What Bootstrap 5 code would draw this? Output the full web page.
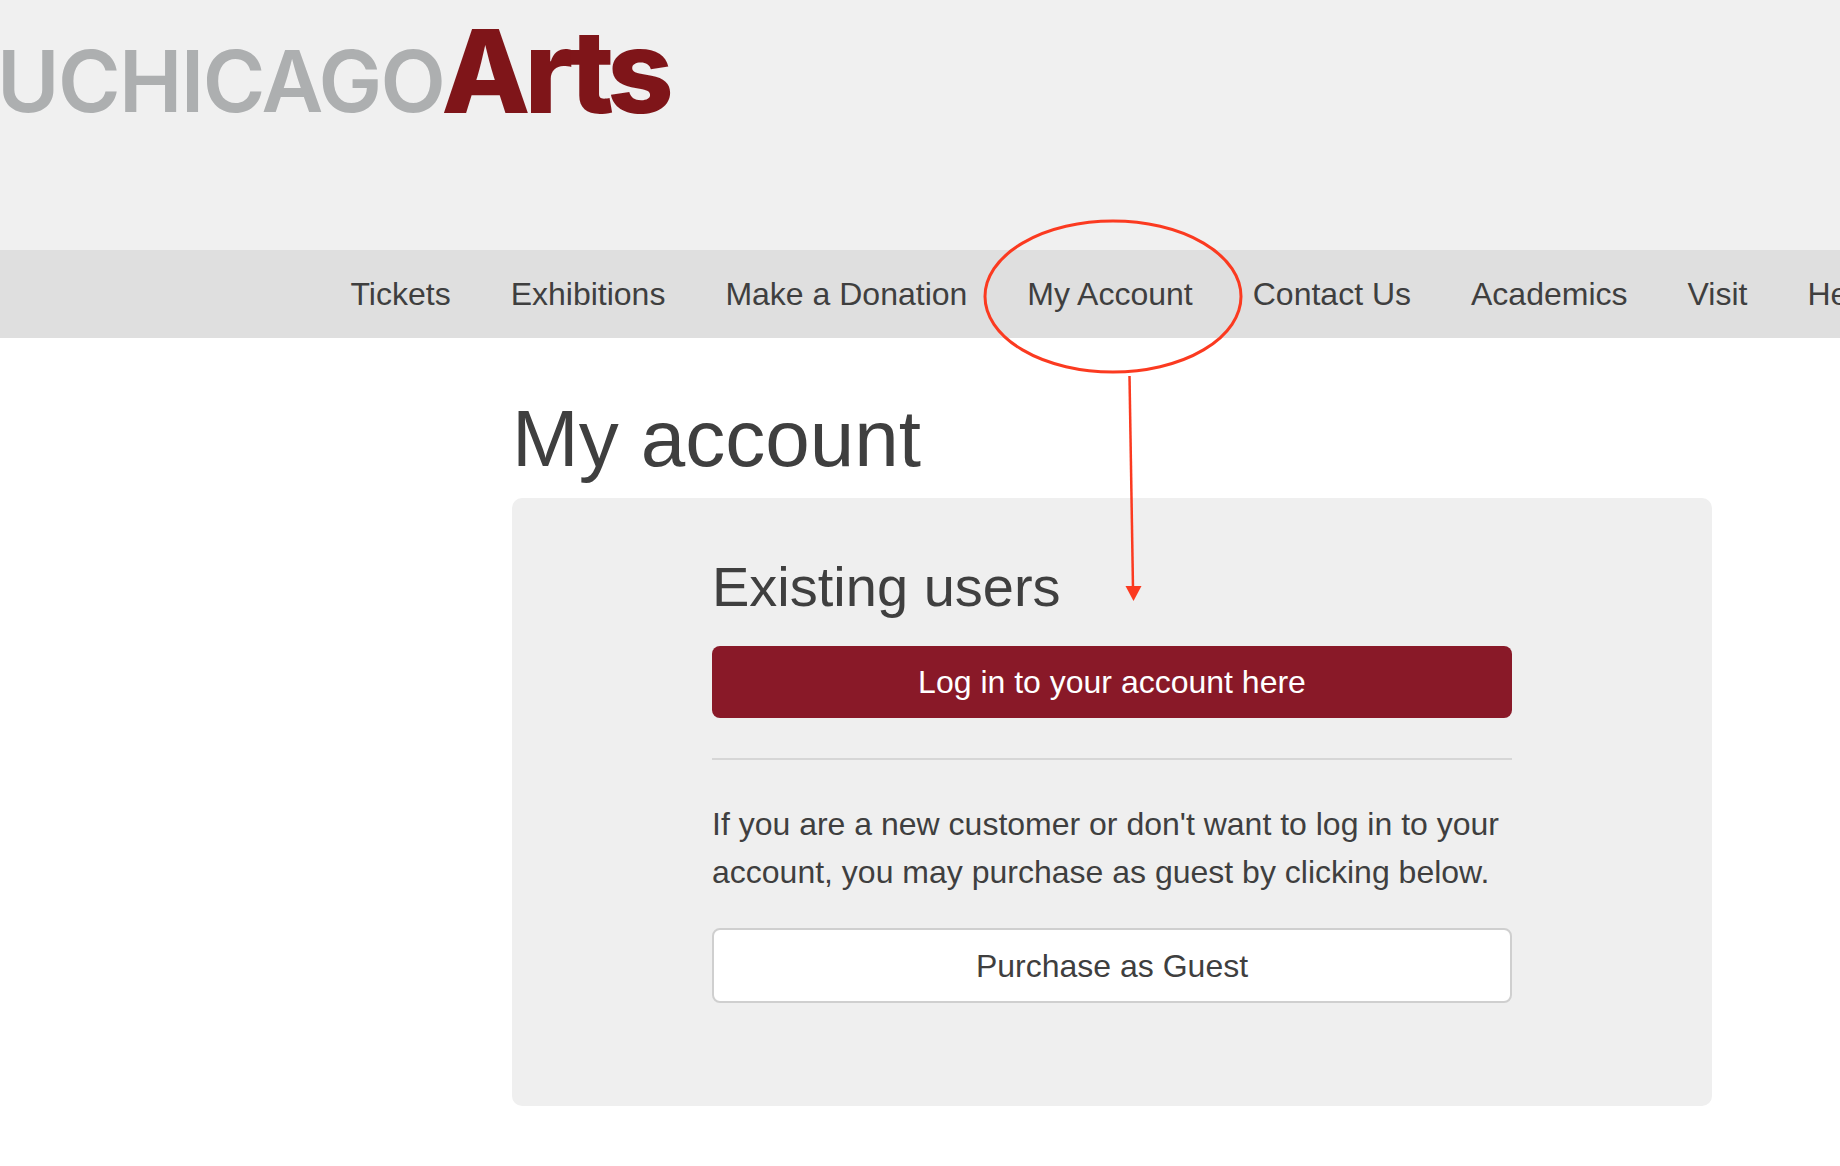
<!doctype html>
<html lang="en">
<head>
<meta charset="utf-8">
<title>My account</title>
<link href="https://cdn.jsdelivr.net/npm/bootstrap@5.3.0/dist/css/bootstrap.min.css" rel="stylesheet">
<style>
html,body{overflow:hidden;height:1166px}
body{font-family:"Liberation Sans",Arial,sans-serif;color:#3f3f3f;background:#fff;position:relative;width:1840px}
.site-head{background:#f0f0f0;height:250px;overflow:hidden}
.logo-row{height:115px;align-items:flex-end;font-family:Inter,sans-serif;white-space:nowrap;text-decoration:none;margin-left:-3px}
.logo-a{color:#adafb0;font-size:85px;font-weight:600;letter-spacing:-1.6px;line-height:66px;height:66px}
.logo-b{color:#7f1519;font-size:116px;font-weight:800;letter-spacing:-6px;line-height:88px;height:88px;margin-left:-3px}
.site-nav{background:#dfdfdf;height:88px;padding-left:350.5px;gap:60px;flex-wrap:nowrap;overflow:hidden;align-items:center}
.site-nav .nav-link{padding:0;font-size:32px;color:#3f3f3f;white-space:nowrap;line-height:48px}
.acct-wrap{width:1200px;margin-left:512px}
.acct-title{font-size:80px;font-weight:400;line-height:96px;margin:0;padding-top:53px;height:160px;color:#3f3f3f}
.acct-panel{background:#efefef;border-radius:10px;height:608px;padding-top:55px}
.acct-inner{width:800px}
.acct-sub{font-size:56px;font-weight:400;line-height:68px;margin:0 0 25px;color:#3f3f3f}
.acct-btn{font-size:32px;line-height:48px;border-radius:8px;display:block}
.btn-login{background:#891928;border:0;color:#fff;height:72px;padding:12px}
.btn-login:hover{background:#891928;color:#fff}
.btn-guest{background:#fff;border:2px solid #cfcfcf;color:#3f3f3f;height:75px;padding:12px}
.acct-rule{border:0;border-top:2px solid #d6d6d6;opacity:1;margin:40px 0 40px}
.acct-copy{font-size:32px;line-height:48px;margin:0 0 32px}
.mark-layer{position:absolute;left:0;top:0;pointer-events:none}
</style>
</head>
<body>
<header class="site-head">
  <a href="#" class="logo-row d-flex"><span class="logo-a">UCHICAGO</span><span class="logo-b">Arts</span></a>
</header>
<nav class="nav site-nav">
  <a class="nav-link" href="#">Tickets</a>
  <a class="nav-link" href="#">Exhibitions</a>
  <a class="nav-link" href="#">Make a Donation</a>
  <a class="nav-link" href="#">My Account</a>
  <a class="nav-link" href="#">Contact Us</a>
  <a class="nav-link" href="#">Academics</a>
  <a class="nav-link" href="#">Visit</a>
  <a class="nav-link" href="#">Help</a>
</nav>
<main class="acct-wrap">
  <h1 class="acct-title">My account</h1>
  <section class="acct-panel">
    <div class="acct-inner mx-auto">
      <h2 class="acct-sub">Existing users</h2>
      <a href="#" class="btn acct-btn btn-login w-100">Log in to your account here</a>
      <hr class="acct-rule">
      <p class="acct-copy">If you are a new customer or don't want to log in to your account, you may purchase as guest by clicking below.</p>
      <a href="#" class="btn acct-btn btn-guest w-100">Purchase as Guest</a>
    </div>
  </section>
</main>
<svg class="mark-layer" width="1840" height="1166" viewBox="0 0 1840 1166" aria-hidden="true">
  <ellipse cx="1113" cy="296.5" rx="128" ry="75.5" fill="none" stroke="#fb3a20" stroke-width="3"/>
  <line x1="1129.5" y1="376" x2="1133" y2="588" stroke="#fb3a20" stroke-width="2.5"/>
  <polygon points="1125.5,586 1141.5,586 1133.5,601" fill="#fb3a20"/>
</svg>
<script src="https://cdn.jsdelivr.net/npm/bootstrap@5.3.0/dist/js/bootstrap.bundle.min.js"></script>
</body>
</html>
